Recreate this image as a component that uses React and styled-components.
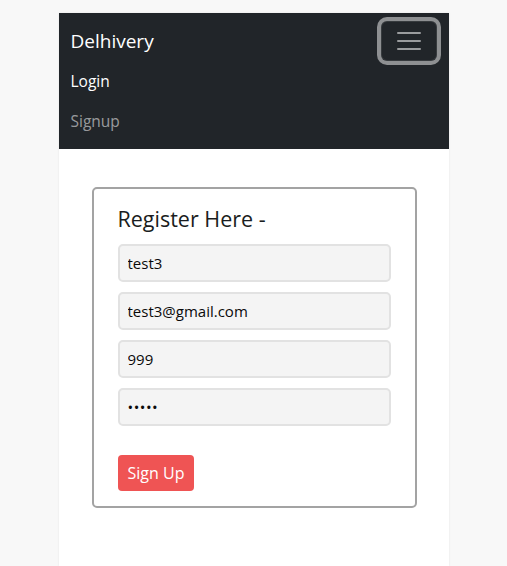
import React from "react";
import styled, { createGlobalStyle } from "styled-components";

const GlobalStyle = createGlobalStyle`
  html, body { margin: 0; padding: 0; }
  body {
    background: #f8f8f8;
    font-family: "Open Sans", "Noto Sans", sans-serif;
    color: #212529;
  }
  * { box-sizing: border-box; }
`;

const Page = styled.div`
  width: 390px;
  margin: 13px auto 0;
  min-height: calc(100vh - 13px);
  background: #ffffff;
  box-shadow: 0 0 2px rgba(0, 0, 0, 0.08);
`;

const Navbar = styled.nav`
  background: #212529;
  padding: 8px 12px;
`;

const TopRow = styled.div`
  display: flex;
  align-items: center;
  justify-content: space-between;
  height: 40px;
`;

const Brand = styled.a`
  color: #ffffff;
  font-size: 19px;
  line-height: 30px;
  text-decoration: none;
`;

const Toggler = styled.button`
  width: 56px;
  height: 40px;
  padding: 0;
  display: flex;
  align-items: center;
  justify-content: center;
  background: transparent;
  border: 1px solid rgba(255, 255, 255, 0.1);
  border-radius: 6px;
  box-shadow: 0 0 0 4px #8e9092;
`;

const NavList = styled.ul`
  list-style: none;
  margin: 0;
  padding: 0;
`;

const NavLink = styled.a`
  display: block;
  padding: 8px 0;
  line-height: 24px;
  font-size: 15.5px;
  text-decoration: none;
  color: ${(p) => (p.$active ? "#ffffff" : "rgba(255,255,255,0.55)")};
`;

const Main = styled.main`
  padding: 38px 32px 40px 33px;
`;

const Card = styled.form`
  border: 2px solid #a3a3a3;
  border-radius: 5px;
  padding: 15px 24px 15px;
  display: flex;
  flex-direction: column;
`;

const Title = styled.h3`
  margin: 0 0 11px;
  font-size: 21.5px;
  line-height: 29px;
  font-weight: 400;
  color: #1a1d20;
`;

const Input = styled.input`
  width: 100%;
  height: 38px;
  margin-bottom: 10px;
  padding: 0 8px;
  font-family: inherit;
  font-size: 15px;
  color: #0a0a0a;
  background: #f4f4f4;
  border: 2px solid #e2e2e2;
  border-radius: 5px;
  outline: none;
  &[type="password"] {
    font-size: 15px;
    letter-spacing: 0.5px;
  }
`;

const Button = styled.button`
  align-self: flex-start;
  margin-top: 19px;
  height: 36px;
  padding: 0 10px;
  font-family: inherit;
  font-size: 16px;
  color: #ffffff;
  background: #ef5454;
  border: none;
  border-radius: 4px;
`;

export default function App() {
  return (
    <>
      <GlobalStyle />
      <Page>
        <Navbar>
          <TopRow>
            <Brand href="#">Delhivery</Brand>
            <Toggler type="button" aria-label="Toggle navigation">
              <svg width="30" height="30" viewBox="0 0 30 30">
                <path
                  d="M4 7h22M4 15h22M4 23h22"
                  stroke="rgba(255,255,255,0.55)"
                  strokeWidth="2"
                  strokeLinecap="round"
                />
              </svg>
            </Toggler>
          </TopRow>
          <NavList>
            <li><NavLink href="#" $active>Login</NavLink></li>
            <li><NavLink href="#">Signup</NavLink></li>
          </NavList>
        </Navbar>
        <Main>
          <Card onSubmit={(e) => e.preventDefault()}>
            <Title>Register Here -</Title>
            <Input type="text" defaultValue="test3" />
            <Input type="email" defaultValue="test3@gmail.com" />
            <Input type="text" defaultValue="999" />
            <Input type="password" defaultValue="12345" />
            <Button type="submit">Sign Up</Button>
          </Card>
        </Main>
      </Page>
    </>
  );
}
